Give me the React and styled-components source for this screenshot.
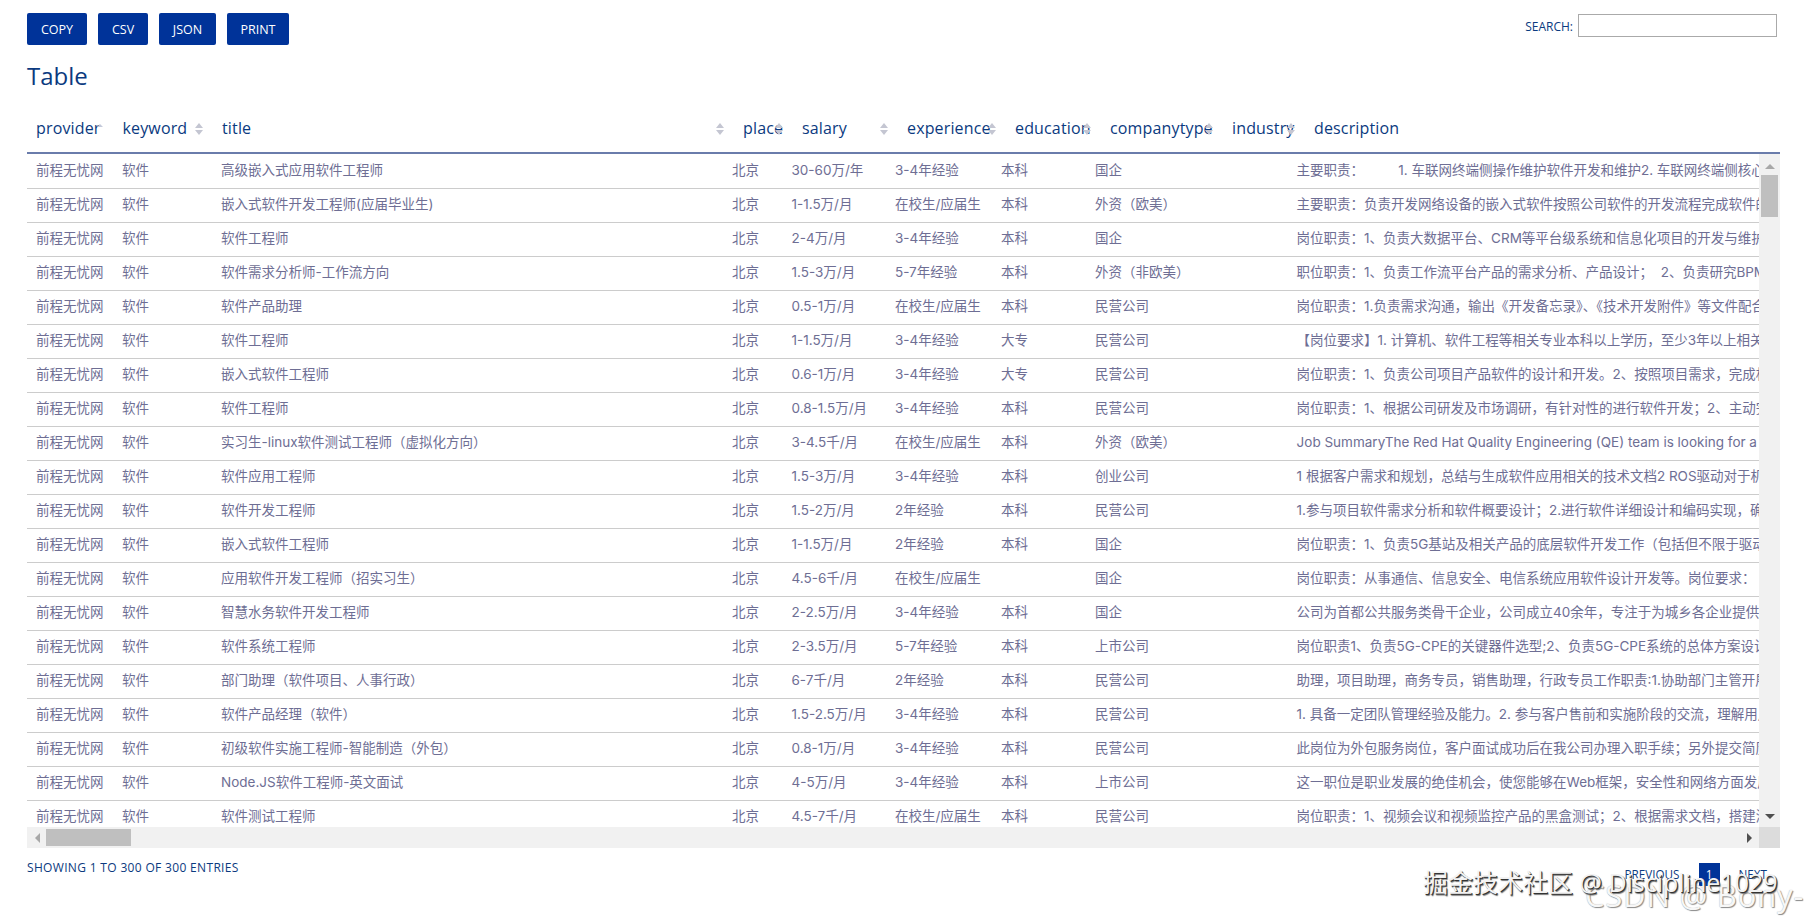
import React from "react";
import styled, { createGlobalStyle } from "styled-components";

const Global = createGlobalStyle`
  html, body { margin: 0; padding: 0; background: #fff; }
  body { font-family: "Open Sans", "Noto Sans CJK SC", sans-serif; overflow: hidden; }
`;
const Page = styled.div`
  position: relative; width: 1804px; height: 924px; box-sizing: border-box;
  padding: 13px 24px 0 27px; overflow: hidden;
`;
const Toolbar = styled.div`display: flex; justify-content: space-between; align-items: flex-start;`;
const Buttons = styled.div`display: flex; gap: 11px;`;
const Button = styled.button`
  height: 32px; width: ${p => p.$w}px; padding: 0; border: 0; border-radius: 2px;
  background: #003399; color: #fff; font: 400 12.5px "Open Sans", sans-serif; text-transform: uppercase;
`;
const Search = styled.label`
  display: flex; align-items: center; gap: 5px; margin-top: 1px; margin-right: 3px;
  font-size: 12px; color: #0b3a80; text-transform: uppercase;
`;
const SearchText = styled.span`padding-top: 2px;`;
const SearchInput = styled.input`
  width: 199px; height: 23px; box-sizing: border-box; border: 1px solid #aaa; padding: 0; background: #fff;
`;
const Title = styled.h2`
  margin: 15px 0 0; font-size: 24px; font-weight: 400; line-height: 32px; color: #0b3a80;
`;
const HeadRow = styled.div`
  display: grid; height: 62px; box-sizing: border-box; padding-bottom: 14px; align-items: end;
  grid-template-columns: 86.5px 99.5px 521px 59px 105px 108px 95px 122px 82px 1fr;
  border-bottom: 2px solid #6a7cab;
`;
const HeadCell = styled.div`
  position: relative; padding-left: 9px; font-size: 16px; line-height: 20px; color: #0b3a80;
  letter-spacing: 0.15px; white-space: nowrap;
`;
const SortIcon = styled.svg`
  position: absolute; right: 10px; top: 5px; width: 8px; height: 12px; fill: ${p => p.$faint ? "#c3c9da" : "#c4c6d2"};
`;
const ScrollArea = styled.div`
  display: grid; grid-template-columns: 1fr 21px; grid-template-rows: 673px 21px;
`;
const Viewport = styled.div`overflow: hidden; padding-top: 1px;`;
const Row = styled.div`
  display: grid; height: 34px; box-sizing: border-box; align-items: center;
  grid-template-columns: 86px 99px 511px 59.5px 103.5px 106px 94px 110px 91.6px 1fr;
  border-bottom: 1px solid #ccc;
`;
const Cell = styled.div`
  padding-left: 9px; margin-top: -4px; font-family: Inter, "Noto Sans CJK SC", sans-serif; font-size: 13.5px; line-height: 18px; color: #6e6e94; white-space: pre;
  overflow: ${p => p.$last ? "visible" : "hidden"};
`;
const VTrack = styled.div`
  display: flex; flex-direction: column; align-items: center; background: #f1f1f1;
`;
const HTrack = styled.div`
  display: flex; align-items: center; background: #f1f1f1; padding: 0 7px 0 8px;
`;
const Corner = styled.div`background: #dcdcdc;`;
const VThumb = styled.div`width: 17px; height: 42px; margin-top: 6px; background: #bfbfbf;`;
const HThumb = styled.div`width: 85px; height: 17px; margin-left: 6px; background: #bfbfbf;`;
const Arrow = styled.svg`
  display: block; flex: none; width: ${p => p.$w}px; height: ${p => p.$h}px; fill: ${p => p.$c};
  ${p => p.$push === "top" && "margin-top: auto; margin-bottom: 8px;"}
  ${p => p.$push === "left" && "margin-left: auto;"}
  ${p => p.$first && "margin-top: 10px;"}
`;
const Footer = styled.div`
  display: flex; justify-content: space-between; align-items: flex-start; padding-top: 12px;
`;
const Info = styled.div`font-size: 12px; line-height: 16px; letter-spacing: 0.33px; color: #0b3a80; text-transform: uppercase;`;
const Pager = styled.div`display: flex; align-items: flex-start; margin-top: 3px; margin-right: 13px; font-size: 11.7px; color: #0b3a80; text-transform: uppercase;`;
const PageLink = styled.span`
  display: block; line-height: 16px; padding-top: 3px; margin: 0 ${p => p.$gap}px 0 0;
`;
const PageBox = styled.span`
  display: block; width: 21px; height: 23px; box-sizing: border-box; padding-top: 3px; line-height: 16px;
  text-align: center; background: #003399; color: #fff; margin-right: 19px;
`;
const Mark = styled.div`
  position: absolute; white-space: nowrap; pointer-events: none;
`;
const MarkJuejin = styled(Mark)`
  left: 1423px; top: 866px; font-size: 25px; line-height: 32px; color: #f2f2f2;
  text-shadow: 1px 1px 0 #333, 1.5px 1.5px 1px #777;
`;
const MarkCsdn = styled(Mark)`
  left: 1585px; top: 875px; font-size: 31px; line-height: 40px; color: #f7f7f7; letter-spacing: 0.8px;
  text-shadow: 1px 1px 1px #888, 0 0 1px #aaa;
`;

const heads = ["provider","keyword","title","place","salary","experience","education","companytype","industry","description"];
const rows = [
["高级嵌入式应用软件工程师","30-60万/年","3-4年经验","本科","国企","主要职责：         1. 车联网终端侧操作维护软件开发和维护2. 车联网终端侧核心模块开发"],
["嵌入式软件开发工程师(应届毕业生)","1-1.5万/月","在校生/应届生","本科","外资（欧美）","主要职责：负责开发网络设备的嵌入式软件按照公司软件的开发流程完成软件的开发"],
["软件工程师","2-4万/月","3-4年经验","本科","国企","岗位职责：1、负责大数据平台、CRM等平台级系统和信息化项目的开发与维护工作"],
["软件需求分析师-工作流方向","1.5-3万/月","5-7年经验","本科","外资（非欧美）","职位职责：1、负责工作流平台产品的需求分析、产品设计；  2、负责研究BPM相关技术"],
["软件产品助理","0.5-1万/月","在校生/应届生","本科","民营公司","岗位职责：1.负责需求沟通，输出《开发备忘录》、《技术开发附件》等文件配合开发"],
["软件工程师","1-1.5万/月","3-4年经验","大专","民营公司","【岗位要求】1. 计算机、软件工程等相关专业本科以上学历，至少3年以上相关工作经验"],
["嵌入式软件工程师","0.6-1万/月","3-4年经验","大专","民营公司","岗位职责：1、负责公司项目产品软件的设计和开发。2、按照项目需求，完成相关开发"],
["软件工程师","0.8-1.5万/月","3-4年经验","本科","民营公司","岗位职责：1、根据公司研发及市场调研，有针对性的进行软件开发；2、主动完成工作"],
["实习生-linux软件测试工程师（虚拟化方向）","3-4.5千/月","在校生/应届生","本科","外资（欧美）","Job SummaryThe Red Hat Quality Engineering (QE) team is looking for a talented intern"],
["软件应用工程师","1.5-3万/月","3-4年经验","本科","创业公司","1 根据客户需求和规划，总结与生成软件应用相关的技术文档2 ROS驱动对于机器人系统"],
["软件开发工程师","1.5-2万/月","2年经验","本科","民营公司","1.参与项目软件需求分析和软件概要设计；2.进行软件详细设计和编码实现，确保质量"],
["嵌入式软件工程师","1-1.5万/月","2年经验","本科","国企","岗位职责：1、负责5G基站及相关产品的底层软件开发工作（包括但不限于驱动开发）"],
["应用软件开发工程师（招实习生）","4.5-6千/月","在校生/应届生","","国企","岗位职责：从事通信、信息安全、电信系统应用软件设计开发等。岗位要求："],
["智慧水务软件开发工程师","2-2.5万/月","3-4年经验","本科","国企","公司为首都公共服务类骨干企业，公司成立40余年，专注于为城乡各企业提供服务"],
["软件系统工程师","2-3.5万/月","5-7年经验","本科","上市公司","岗位职责1、负责5G-CPE的关键器件选型;2、负责5G-CPE系统的总体方案设计工作"],
["部门助理（软件项目、人事行政）","6-7千/月","2年经验","本科","民营公司","助理，项目助理，商务专员，销售助理，行政专员工作职责:1.协助部门主管开展工作"],
["软件产品经理（软件）","1.5-2.5万/月","3-4年经验","本科","民营公司","1. 具备一定团队管理经验及能力。2. 参与客户售前和实施阶段的交流，理解用户需求"],
["初级软件实施工程师-智能制造（外包）","0.8-1万/月","3-4年经验","本科","民营公司","此岗位为外包服务岗位，客户面试成功后在我公司办理入职手续；另外提交简历至邮箱"],
["Node.JS软件工程师-英文面试","4-5万/月","3-4年经验","本科","上市公司","这一职位是职业发展的绝佳机会，使您能够在Web框架，安全性和网络方面发展技能"],
["软件测试工程师","4.5-7千/月","在校生/应届生","本科","民营公司","岗位职责：1、视频会议和视频监控产品的黑盒测试；2、根据需求文档，搭建测试环境"],
];

const Sort = () => (
  <SortIcon viewBox="0 0 8 12"><path d="M4 0 8 5H0zM4 12 0 7h8z" /></SortIcon>
);
const SortAsc = () => (
  <SortIcon $faint viewBox="0 0 8 12"><path d="M4 1 7 4H1z" /></SortIcon>
);

export default function App() {
  return (
    <Page>
      <Global />
      <Toolbar>
        <Buttons>
          <Button $w={60}>Copy</Button>
          <Button $w={50}>CSV</Button>
          <Button $w={57}>JSON</Button>
          <Button $w={62}>Print</Button>
        </Buttons>
        <Search><SearchText>Search:</SearchText><SearchInput /></Search>
      </Toolbar>
      <Title>Table</Title>
      <HeadRow>
        {heads.map((h, i) => (
          <HeadCell key={h}>{h}{i === 0 ? <SortAsc /> : i < 9 ? <Sort /> : null}</HeadCell>
        ))}
      </HeadRow>
      <ScrollArea>
        <Viewport>
          {rows.map((r, i) => (
            <Row key={i}>
              <Cell>前程无忧网</Cell>
              <Cell>软件</Cell>
              <Cell>{r[0]}</Cell>
              <Cell>北京</Cell>
              <Cell>{r[1]}</Cell>
              <Cell>{r[2]}</Cell>
              <Cell>{r[3]}</Cell>
              <Cell>{r[4]}</Cell>
              <Cell />
              <Cell $last>{r[5]}</Cell>
            </Row>
          ))}
        </Viewport>
        <VTrack>
          <Arrow $first $w={10} $h={5} $c="#a8a8a8" viewBox="0 0 10 5"><path d="M5 0 10 5H0z" /></Arrow>
          <VThumb />
          <Arrow $push="top" $w={10} $h={5} $c="#505050" viewBox="0 0 10 5"><path d="M0 0h10L5 5z" /></Arrow>
        </VTrack>
        <HTrack>
          <Arrow $w={5} $h={10} $c="#a8a8a8" viewBox="0 0 5 10"><path d="M5 0v10L0 5z" /></Arrow>
          <HThumb />
          <Arrow $push="left" $w={5} $h={10} $c="#505050" viewBox="0 0 5 10"><path d="M0 0v10l5-5z" /></Arrow>
        </HTrack>
        <Corner />
      </ScrollArea>
      <Footer>
        <Info>Showing 1 to 300 of 300 entries</Info>
        <Pager>
          <PageLink $gap={19}>Previous</PageLink>
          <PageBox>1</PageBox>
          <PageLink $gap={0}>Next</PageLink>
        </Pager>
      </Footer>
      <MarkCsdn>CSDN @ Bony-</MarkCsdn>
      <MarkJuejin>掘金技术社区 @ Discipline1029</MarkJuejin>
    </Page>
  );
}
